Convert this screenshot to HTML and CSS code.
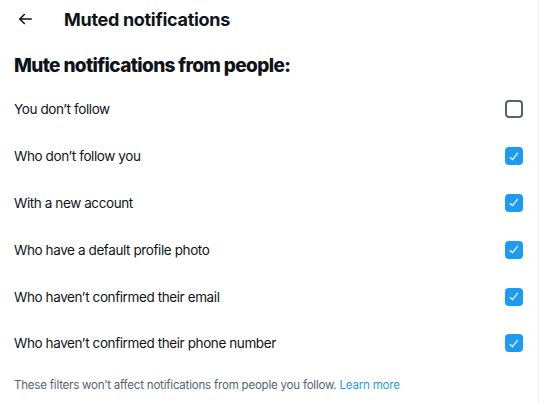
FILE: index.html
```html
<!DOCTYPE html>
<html>
<head>
<meta charset="utf-8">
<link rel="stylesheet" href="styles.css">
</head>
<body>
<div class="page">
  <header class="header">
    <span class="back">
      <svg viewBox="0 0 24 24" width="18" height="18"><path d="M7.414 13l5.043 5.04-1.414 1.42L3.586 12l7.457-7.46 1.414 1.42L7.414 11H21v2H7.414z" fill="#0f1419"/></svg>
    </span>
    <h1 class="title">Muted notifications</h1>
  </header>
  <h2 class="section">Mute notifications from people:</h2>
  <div class="row"><span class="label">You don’t follow</span><span class="box"></span></div>
  <div class="row"><span class="label">Who don’t follow you</span><span class="box on"><svg viewBox="0 0 24 24"><path d="M9.64 18.952l-5.55-4.861 1.317-1.504 3.951 3.459 8.459-10.948L19.4 6.32 9.64 18.952z" fill="#fff"/></svg></span></div>
  <div class="row"><span class="label">With a new account</span><span class="box on"><svg viewBox="0 0 24 24"><path d="M9.64 18.952l-5.55-4.861 1.317-1.504 3.951 3.459 8.459-10.948L19.4 6.32 9.64 18.952z" fill="#fff"/></svg></span></div>
  <div class="row"><span class="label">Who have a default profile photo</span><span class="box on"><svg viewBox="0 0 24 24"><path d="M9.64 18.952l-5.55-4.861 1.317-1.504 3.951 3.459 8.459-10.948L19.4 6.32 9.64 18.952z" fill="#fff"/></svg></span></div>
  <div class="row"><span class="label">Who haven’t confirmed their email</span><span class="box on"><svg viewBox="0 0 24 24"><path d="M9.64 18.952l-5.55-4.861 1.317-1.504 3.951 3.459 8.459-10.948L19.4 6.32 9.64 18.952z" fill="#fff"/></svg></span></div>
  <div class="row"><span class="label">Who haven’t confirmed their phone number</span><span class="box on"><svg viewBox="0 0 24 24"><path d="M9.64 18.952l-5.55-4.861 1.317-1.504 3.951 3.459 8.459-10.948L19.4 6.32 9.64 18.952z" fill="#fff"/></svg></span></div>
  <p class="note">These filters won’t affect notifications from people you follow. <a class="link" href="#">Learn more</a></p>
</div>
</body>
</html>
```
FILE: styles.css
```css
* { box-sizing: border-box; }
html, body { margin: 0; padding: 0; background: #fff; }
body { font-family: Inter, "Noto Sans", sans-serif; color: #0f1419; }
.page {
  width: 539px;
  height: 403px;
  border-right: 1px solid #eff3f4;
  overflow: hidden;
}
.header {
  display: flex;
  align-items: center;
  height: 38px;
  padding: 0 16px;
}
.back { width: 18px; height: 18px; display: flex; margin-right: 30px; }
.title { margin: 0; font-size: 18px; font-weight: 700; letter-spacing: -0.3px; }
.section { margin: 0; padding: 16px 14px 8px; font-size: 19px; font-weight: 800; letter-spacing: -0.65px; line-height: 24px; }
.row {
  display: flex;
  align-items: center;
  justify-content: space-between;
  height: 46.8px;
  padding: 0 15px 0 14px;
}
.label { font-size: 13.5px; line-height: 20px; letter-spacing: -0.4px; }
.box {
  width: 18px; height: 18px;
  border: 2px solid #536471;
  border-radius: 4px;
  display: flex; align-items: center; justify-content: center;
}
.box.on { background: #1d9bf0; border-color: #1d9bf0; }
.box svg { width: 15px; height: 15px; }
.note { margin: 0; padding: 10px 14px; font-size: 11.5px; color: #536471; line-height: 16px; letter-spacing: -0.2px; }
.link { color: #1d9bf0; text-decoration: none; }
```
